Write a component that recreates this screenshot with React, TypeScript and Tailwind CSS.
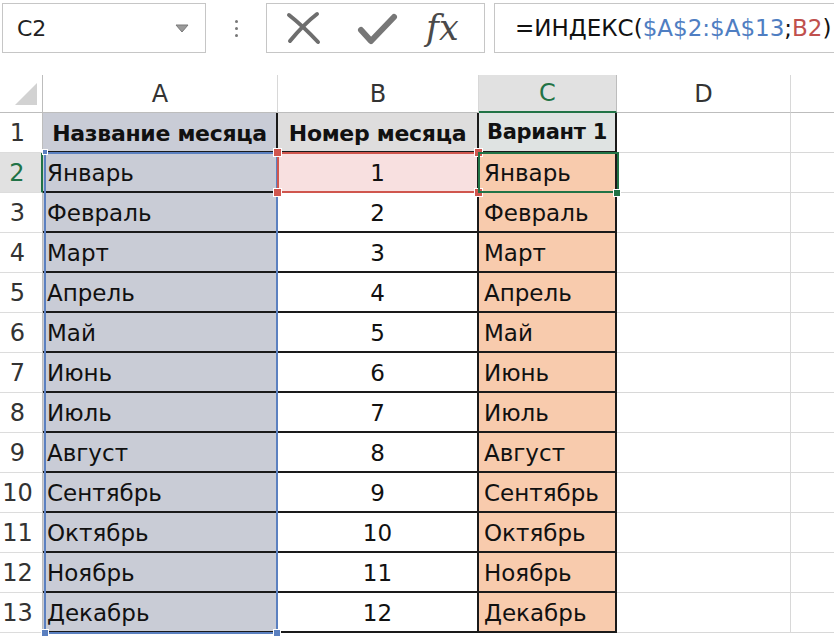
import React from 'react';

const months = [
  'Январь', 'Февраль', 'Март', 'Апрель', 'Май', 'Июнь',
  'Июль', 'Август', 'Сентябрь', 'Октябрь', 'Ноябрь', 'Декабрь',
];

function Handle({ className }: { className: string }) {
  return <div className={`absolute border border-white ${className}`} />;
}

export default function App() {
  return (
    <div className="relative w-[834px] h-[638px] overflow-hidden bg-white font-['DejaVu_Sans',sans-serif] text-[#111]">
      {/* formula bar */}
      <div className="flex h-[75px] items-start pt-[3px]">
        <div className="ml-[2px] flex h-[50px] w-[204px] shrink-0 items-center justify-between border border-[#c6c6c6] pl-[14px] pr-[16px]">
          <span className="text-[22px] text-[#222]">C2</span>
          <svg width="14" height="9" viewBox="0 0 14 9">
            <path d="M1 1 L13 1 L7 8 Z" fill="#9a9a9a" stroke="#7a7a7a" strokeWidth="1" />
          </svg>
        </div>
        <div className="flex h-[50px] w-[60px] shrink-0 flex-col items-center justify-center gap-[4px]">
          <div className="h-[3px] w-[3px] rounded-full bg-[#777]" />
          <div className="h-[3px] w-[3px] rounded-full bg-[#777]" />
          <div className="h-[3px] w-[3px] rounded-full bg-[#777]" />
        </div>
        <div className="flex h-[50px] w-[219px] shrink-0 items-center border border-[#c6c6c6]">
          <svg className="ml-[19px] shrink-0" width="36" height="34" viewBox="0 0 36 34">
            <path d="M3 4 Q17 15 32 31" stroke="#6e6e6e" strokeWidth="4" fill="none" strokeLinecap="round" />
            <path d="M31 3 Q18 13 4 30" stroke="#6e6e6e" strokeWidth="4" fill="none" strokeLinecap="round" />
          </svg>
          <svg className="ml-[34px] shrink-0" width="42" height="36" viewBox="0 0 42 36">
            <path d="M5 20 L15 31 L38 7" stroke="#777" strokeWidth="6" fill="none" strokeLinecap="round" strokeLinejoin="round" />
          </svg>
          <span className="ml-[28px] font-['DejaVu_Serif',serif] text-[35px] italic leading-none text-[#4a4a4a]">fx</span>
        </div>
        <div className="ml-[9px] flex h-[50px] w-[400px] shrink-0 items-center whitespace-nowrap border border-[#c6c6c6] pl-[20px] text-[23px]">
          <span>=ИНДЕКС(</span>
          <span className="text-[#4f7ec2]">$A$2:$A$13</span>
          <span>;</span>
          <span className="text-[#c0504d]">B2</span>
          <span>)</span>
        </div>
      </div>

      {/* grid */}
      <div className="relative">
        <div className="grid grid-cols-[43px_235px_201px_138px_174px_1fr] grid-rows-[38px_repeat(13,40px)]">
          {/* header row */}
          <div className="relative border-b border-r border-[#bdbdbd]">
            <svg className="absolute left-[15px] top-[8px]" width="22" height="22" viewBox="0 0 22 22">
              <path d="M22 0 L22 22 L0 22 Z" fill="#d2d2d2" />
            </svg>
          </div>
          <div className="flex items-center justify-center border-b border-r border-b-[#bdbdbd] border-r-[#d8d8d8] text-[24px] text-[#333]">A</div>
          <div className="flex items-center justify-center border-b border-r border-b-[#bdbdbd] border-r-[#d8d8d8] text-[24px] text-[#333]">B</div>
          <div className="flex items-center justify-center border-b-2 border-r border-b-[#217346] border-r-[#bdbdbd] bg-[#e1e1e1] text-[24px] text-[#217346]">C</div>
          <div className="flex items-center justify-center border-b border-r border-b-[#bdbdbd] border-r-[#d8d8d8] text-[24px] text-[#333]">D</div>
          <div className="border-b border-[#bdbdbd]" />

          {/* row 1 */}
          <div className="flex items-center justify-center border-b border-r border-b-[#dcdcdc] border-r-[#bdbdbd] pr-[7px] text-[24px] text-[#333]">1</div>
          <div className="flex items-center justify-center whitespace-nowrap border-b-2 border-r-2 border-[#1a1a1a] bg-[#c9ccd6] pt-[2px] text-[22px] font-bold tracking-[-0.3px]">Название месяца</div>
          <div className="flex items-center justify-center whitespace-nowrap border-b-2 border-r-2 border-[#1a1a1a] bg-[#dedddd] pt-[2px] text-[22px] font-bold tracking-[-0.3px]">Номер месяца</div>
          <div className="flex items-center justify-center whitespace-nowrap border-b-2 border-r-2 border-[#1a1a1a] bg-[#dfe3e2] pt-[2px] text-[21px] font-bold tracking-[-0.3px]">Вариант 1</div>
          <div className="border-b border-r border-[#d8d8d8]" />
          <div className="border-b border-[#d8d8d8]" />

          {months.map((m, i) => {
            const row = i + 2;
            const active = row === 2;
            return (
              <React.Fragment key={m}>
                <div
                  className={
                    active
                      ? 'flex items-center justify-center border-b border-r-2 border-b-[#dcdcdc] border-r-[#217346] bg-[#e1e1e1] pr-[7px] text-[24px] text-[#217346]'
                      : 'flex items-center justify-center border-b border-r border-b-[#dcdcdc] border-r-[#bdbdbd] pr-[7px] text-[24px] text-[#333]'
                  }
                >
                  {row}
                </div>
                <div className="flex items-center border-b-2 border-r-2 border-[#1a1a1a] bg-[#c9ccd6] pl-[4px] pt-[3px] text-[23px]">{m}</div>
                <div className={`flex items-center justify-center border-b-2 border-r-2 border-[#1a1a1a] pt-[3px] text-[23px] ${active ? 'bg-[#f8e0e0]' : 'bg-white'}`}>{i + 1}</div>
                <div className="flex items-center whitespace-nowrap border-b-2 border-r-2 border-[#1a1a1a] bg-[#f8cbad] pl-[5px] pt-[3px] text-[23px]">{m}</div>
                <div className="border-b border-r border-[#d8d8d8]" />
                <div className="border-b border-[#d8d8d8]" />
              </React.Fragment>
            );
          })}
        </div>

        {/* blue range A2:A13 */}
        <div className="absolute left-[44px] top-[77px] h-[482px] w-[234px] border-2 border-[#5b80c0]" />
        <Handle className="left-[42px] top-[74px] h-[6px] w-[6px] bg-[#5b80c0]" />
        <Handle className="left-[41px] top-[554px] h-[8px] w-[8px] bg-[#5b80c0]" />
        <Handle className="left-[273px] top-[554px] h-[8px] w-[8px] bg-[#5b80c0]" />

        {/* red range B2 */}
        <div className="absolute left-[277px] top-[77px] h-[41px] w-[203px] border-2 border-[#d0564e]" />
        <Handle className="left-[273px] top-[73px] h-[9px] w-[9px] bg-[#d0564e]" />
        <Handle className="left-[474px] top-[73px] h-[9px] w-[9px] bg-[#d0564e]" />
        <Handle className="left-[273px] top-[113px] h-[9px] w-[9px] bg-[#d0564e]" />
        <Handle className="left-[474px] top-[113px] h-[9px] w-[9px] bg-[#d0564e]" />

        {/* active cell C2 */}
        <div className="absolute left-[478px] top-[77px] h-[41px] w-[141px] border-2 border-[#217346]" />
        <Handle className="left-[613px] top-[114px] h-[8px] w-[8px] bg-[#217346]" />
      </div>
    </div>
  );
}
